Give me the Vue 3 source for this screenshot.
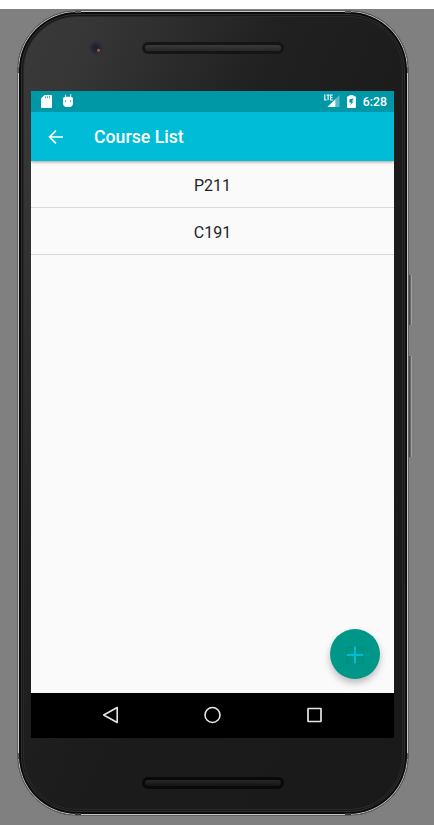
<script setup>
const courses = ['P211', 'C191']
</script>

<template>
  <main class="stage">
    <div class="phone">
      <i class="side power"></i>
      <i class="side volume"></i>
      <i class="band top left"></i><i class="band top right"></i>
      <i class="band bottom left"></i><i class="band bottom right"></i>
      <i class="notch upper west"></i><i class="notch upper east"></i>
      <i class="notch lower west"></i><i class="notch lower east"></i>
      <div class="bezel upper-bezel">
        <span class="camera"></span>
        <span class="speaker"></span>
      </div>
      <section class="screen">
        <div class="status">
          <svg class="sd" width="11" height="13" viewBox="0 0 11 13"><path d="M3.5 0H10q1 0 1 1v11q0 1-1 1H1q-1 0-1-1V3.5z" fill="#fff" /><path d="M4.5 1.300v2M6.500 1.300v2M8.500 1.300v2" stroke="#0097a7" stroke-width="1.100" opacity=".75" /></svg>
          <svg class="droid" width="10" height="14" viewBox="0 0 10 14"><path d="M0 4.6Q0 3.500 1.200 3.200L2 3V.8h.8v2h4.600V0h.8v3l.8.3q1 .2 1 1.300v4.800Q10 13 5 13T0 9.400z" fill="#fff" /><circle cx="2.500" cy="7" r=".7" fill="#0097a7" /><circle cx="7.500" cy="7" r=".7" fill="#0097a7" /></svg>
          <span class="grow"></span>
          <svg class="signal" width="16" height="14" viewBox="0 0 16 14"><path d="M15.500 1v12H3.500z" fill="#fff" opacity=".35" /><path d="M11.300 5.200V13H3.500z" fill="#fff" /><path d="M0 0h9.200v6.800H0z" fill="#0097a7" /><path d="M.8.5v5.500h1.800M2.500 1h3.200M4.100 1v5.300M8.800 1H6.700v5h2.100M6.700 3.500h1.800" fill="none" stroke="#fff" stroke-width="1.100" /></svg>
          <svg class="battery" width="9" height="13" viewBox="0 0 9 13"><path d="M2.500 0h4v1.200H8q.9 0 .9 1V12q0 1-.9 1H1q-1 0-1-1V2.200q0-1 1-1h1.500z" fill="#fff" /><path d="M6.800 3.500 2.600 4.300 2.300 7.500h1.900L2.700 10.600 6.700 6.400H4.900z" fill="#0097a7" /></svg>
          <time>6:28</time>
        </div>
        <header class="toolbar">
          <svg width="16" height="16" viewBox="0 0 16 16"><path d="M15 8H1.600M8 1.600 1.600 8 8 14.400" fill="none" stroke="#fff" stroke-width="1.700" /></svg>
          <h1>Course List</h1>
        </header>
        <div class="content">
          <ul>
            <li v-for="course in courses" :key="course">{{ course }}</li>
          </ul>
          <button class="fab" aria-label="Add course">
            <svg width="18" height="18" viewBox="0 0 18 18"><rect x=".8" y="1" width="16.500" height="16.500" rx="1.500" fill="#009485" stroke="#008c7f" stroke-width=".6" /><path d="M9 .5V17.500M.7 9h16.600" stroke="#00bcd4" stroke-width="2" /></svg>
          </button>
        </div>
        <nav>
          <svg width="17" height="18" viewBox="0 0 17 18"><path d="M15.200 1.500v15L1.700 9z" fill="none" stroke="#e6e6e6" stroke-width="1.600" stroke-linejoin="round" /></svg>
          <svg width="18" height="18" viewBox="0 0 18 18"><circle cx="8.500" cy="9" r="7.500" fill="none" stroke="#e6e6e6" stroke-width="1.600" /></svg>
          <svg width="16" height="16" viewBox="0 0 16 16"><rect x="1" y="1.500" width="13" height="13" rx=".5" fill="none" stroke="#e6e6e6" stroke-width="1.700" /></svg>
        </nav>
      </section>
      <div class="bezel lower-bezel"><span class="speaker dim"></span></div>
    </div>
  </main>
</template>

<style>
body { margin: 0; background: #fff; }
</style>

<style scoped>
* { box-sizing: border-box; }
.stage {
  height: 825px;
  padding: 1px 0 0 17px;
  border-top: 9px solid #fff;
  background: #808080;
  overflow: hidden;
  font-family: Roboto, sans-serif;
}
.phone {
  position: relative;
  width: 392px;
  height: 806px;
  border: 1px solid #606060;
  border-radius: 60px;
  padding: 0 13px;
  background: linear-gradient(115deg, #3b3b3b 0, #353535 12%, #202020 36%, #1b1b1b 60%, #191919 100%);
  box-shadow: inset 0 0 0 1px #c4c4c4, inset 0 0 0 3px #0b0b0b, inset 0 0 0 4px #303030, inset 0 0 0 5px #161616, inset 0 0 0 6px #292929;
}
.bezel { display: flex; justify-content: center; position: relative; }
.upper-bezel { height: 80px; padding-top: 31px; }
.lower-bezel { height: 77px; padding-top: 39px; }
.speaker {
  width: 142px;
  height: 12px;
  border: 3px solid #151515;
  border-radius: 6px;
  background: linear-gradient(#3a3a3a, #262626);
}
.speaker.dim { border-color: #090909; background: linear-gradient(#282828, #131313); }
.camera {
  position: absolute;
  left: 58px;
  top: 30px;
  width: 14px;
  height: 14px;
  border-radius: 50%;
  background: radial-gradient(circle at 68% 66%, #936061 0 1px, transparent 2px), radial-gradient(circle, #242030 0 3px, #302c31 5px, #333 7px);
}
.side { position: absolute; left: 391px; width: 3px; border-left: 1px solid #4c4c4c; border-right: 1px solid #a0a0a0; background: #6a6a6a; border-radius: 0 1px 1px 0; }
.power { top: 264px; height: 50px; }
.volume { top: 345px; height: 101px; }
.band { position: absolute; width: 6px; height: 2px; background: #555; }
.band.top { top: 0; }
.band.bottom { bottom: 0; background: #333; }
.band.left { left: 57px; }
.band.right { right: 57px; }
.notch { position: absolute; width: 2px; height: 6px; background: #5c5c5c; }
.notch.upper { top: 56px; }
.notch.lower { bottom: 56px; }
.notch.west { left: -1px; }
.notch.east { right: -1px; }
.screen { display: flex; flex-direction: column; width: 363px; height: 647px; background: #fafafa; }
.status { display: flex; height: 21px; align-items: flex-start; padding: 4px 7px 0 10px; background: #0097a7; }
.droid { margin: -1px 0 0 11px; }
.grow { flex: 1; }
.signal { margin-top: -1px; }
.battery { margin-left: 7px; }
time { margin-left: 7px; color: #fff; font-size: 12.300px; line-height: 15px; font-weight: 500; }
.toolbar { position: relative; display: flex; flex: 0 0 49px; align-items: center; padding: 0 0 0 17px; background: #00bcd7; box-shadow: 0 1px 3px rgba(0, 0, 0, .38); clip-path: inset(0 0 -6px); }
.toolbar svg { margin-top: 1px; }
h1 { margin: 1px 0 0 30px; color: #fff; font-size: 17.700px; line-height: 24px; font-weight: 500; }
.content { flex: 1; position: relative; }
ul { margin: 0; padding: 0; list-style: none; }
li { height: 47px; border-bottom: 1px solid #d8d8d8; color: #252525; font-size: 16px; line-height: 50px; text-align: center; }
.fab { position: absolute; right: 14px; bottom: 14px; display: grid; place-items: center; width: 50px; height: 50px; padding: 1px 0 0; border: 0; border-radius: 50%; background: #009688; box-shadow: 0 4px 7px rgba(0, 0, 0, .25); }
nav { display: flex; flex: 0 0 45px; justify-content: space-between; align-items: center; padding: 0 71px 2px; background: #000; }
</style>
